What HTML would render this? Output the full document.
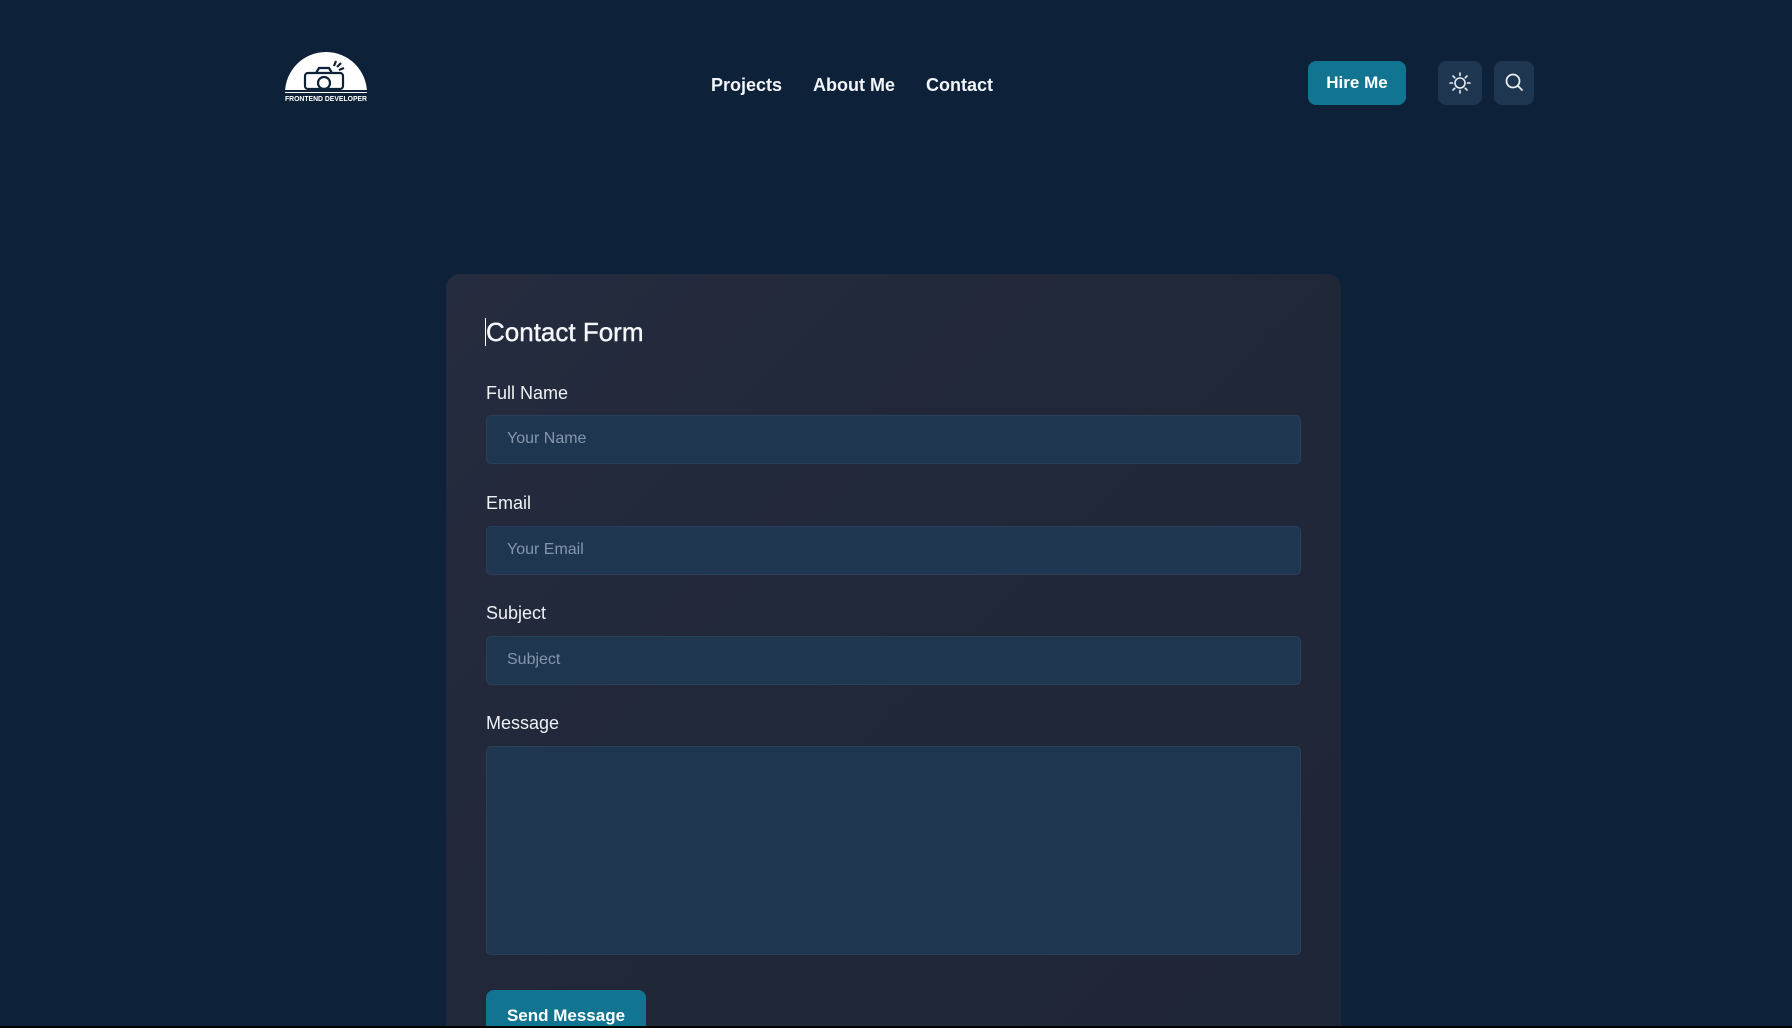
<!DOCTYPE html>
<html><head><meta charset="utf-8"><style>
*{box-sizing:border-box;margin:0;padding:0}
html,body{width:1792px;height:1028px;overflow:hidden}
body{background:#0d2238;font-family:"Liberation Sans",sans-serif;color:#fff;position:relative}
.nav a{position:absolute;top:75px;font-size:18px;font-weight:bold;color:#f1f4f8;text-decoration:none}
.btn{position:absolute;border-radius:8px}
.card{position:absolute;left:446px;top:274px;width:895px;height:752px;border-radius:14px 14px 0 0;background:linear-gradient(135deg,#262c3f,#212839 40%,#1f2637);overflow:hidden}
.lbl{position:absolute;left:40px;font-size:18px;color:#eef1f5}
.inp{position:absolute;left:40px;width:815px;height:49px;background:#1f3651;border:1px solid #2a3f58;border-radius:5px;font-size:16px;color:#8596aa;padding:14px 20px}
</style></head><body>
<svg style="position:absolute;left:283px;top:51px" width="86" height="56" viewBox="0 0 86 56">
<path d="M2 42 A41 41 0 0 1 84 42 Z" fill="#fff"/>
<rect x="2" y="39" width="82" height="2" fill="#0d2238"/>
<g fill="none" stroke="#0d2238" stroke-width="2.2">
<rect x="22" y="22" width="38" height="16" rx="3"/>
<path d="M33 22 l3-5 h10 l3 5"/>
<circle cx="41" cy="32" r="6"/>
<path d="M53 10 l-2 5 M58 12 l-4 4 M61 17 l-5 2"/>
</g>
<text x="43" y="50" text-anchor="middle" font-size="7" font-weight="bold" fill="#fff" font-family="Liberation Sans" textLength="82" lengthAdjust="spacingAndGlyphs">FRONTEND DEVELOPER</text>
</svg>
<div class="nav"><a style="left:711px">Projects</a><a style="left:813px">About Me</a><a style="left:926px">Contact</a></div>
<div class="btn" style="left:1308px;top:61px;width:98px;height:44px;background:#117591;font-size:17px;font-weight:bold;text-align:center;line-height:44px">Hire Me</div>
<div class="btn" style="left:1438px;top:61px;width:44px;height:44px;background:#1f3651">
<svg width="44" height="44" viewBox="0 0 44 44" fill="none" stroke="#e8edf2" stroke-width="1.6" stroke-linecap="round"><circle cx="22" cy="22" r="5"/><path d="M22 12v2.5M22 29.5v2.5M12 22h2.5M29.5 22h2.5M15 15l1.8 1.8M27.2 27.2l1.8 1.8M15 29l1.8-1.8M27.2 16.8l1.8-1.8"/></svg></div>
<div class="btn" style="left:1494px;top:61px;width:40px;height:44px;background:#1f3651">
<svg width="40" height="44" viewBox="0 0 40 44" fill="none" stroke="#e8edf2" stroke-width="1.8" stroke-linecap="round"><circle cx="19" cy="20" r="6.5"/><path d="M24 25l4 4"/></svg></div>
<div class="card">
<div style="position:absolute;left:39px;top:44px;width:1px;height:28px;background:#fff"></div>
<div style="position:absolute;left:40px;top:43px;font-size:26px;color:#f4f6f9;-webkit-text-stroke:0.4px #f4f6f9">Contact Form</div>
<div class="lbl" style="top:109px">Full Name</div>
<div class="inp" style="top:141px">Your Name</div>
<div class="lbl" style="top:219px">Email</div>
<div class="inp" style="top:252px">Your Email</div>
<div class="lbl" style="top:329px">Subject</div>
<div class="inp" style="top:362px">Subject</div>
<div class="lbl" style="top:439px">Message</div>
<div class="inp" style="top:472px;height:209px"></div>
<div style="position:absolute;left:40px;top:716px;width:160px;height:60px;border-radius:8px;background:#117591;font-size:17px;font-weight:bold;text-align:center;padding-top:16px">Send Message</div>
</div>
<div style="position:absolute;left:0;top:1026px;width:1792px;height:2px;background:#000"></div>
</body></html>
